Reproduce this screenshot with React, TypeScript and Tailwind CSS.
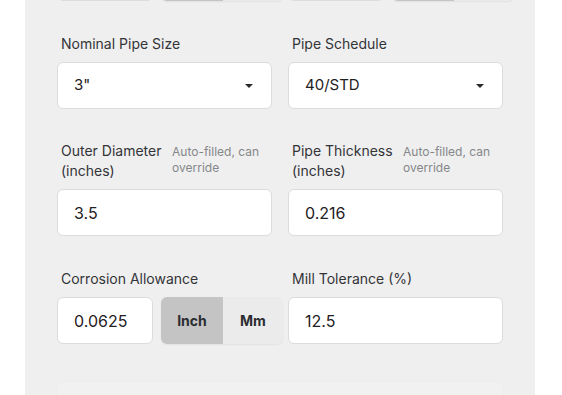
import React from "react";

function Caret() {
  return (
    <svg width="8" height="4" viewBox="0 0 8 4" className="shrink-0">
      <path d="M0 0 L8 0 L4 4 Z" fill="#2a2a2a" />
    </svg>
  );
}

function Label({ text, hint }: { text: string; hint?: string }) {
  if (!hint) {
    return <div className="pl-1 text-[14px] leading-5 text-[#333438]">{text}</div>;
  }
  return (
    <div className="flex items-baseline gap-[10px] pl-1">
      <div className="w-[101px] shrink-0 text-[14px] leading-5 text-[#333438]">{text}</div>
      <div className="flex-1 text-[12px] leading-4 text-[#85878a]">{hint}</div>
    </div>
  );
}

function Select({ value }: { value: string }) {
  return (
    <div className="flex h-[47px] items-center justify-between rounded-md border border-[#dcdcdc] bg-white pl-4 pr-[18px] text-[15px] text-[#1f2023]">
      <span>{value}</span>
      <Caret />
    </div>
  );
}

function Input({ value, className = "" }: { value: string; className?: string }) {
  return (
    <div
      className={
        "flex h-[47px] shrink-0 items-center rounded-md border border-[#dcdcdc] bg-white pl-4 text-[16px] text-[#1f2023] " +
        className
      }
    >
      {value}
    </div>
  );
}

function Toggle({ labels = true }: { labels?: boolean }) {
  return (
    <div className="flex h-[47px] w-[122px] shrink-0 overflow-hidden rounded-md bg-[#ebebeb] shadow-[0_1px_2px_rgba(0,0,0,0.06)] text-[14px] font-bold text-[#2b2d31]">
      <div className="flex w-[62px] items-center justify-center bg-[#c3c4c3]">{labels ? "Inch" : ""}</div>
      <div className="flex flex-1 items-center justify-center">{labels ? "Mm" : ""}</div>
    </div>
  );
}

export default function App() {
  return (
    <div className="h-[395px] w-[562px] overflow-hidden bg-white" style={{ fontFamily: "Inter, 'Noto Sans', sans-serif" }}>
      <div className="ml-[25px] mt-[-46px] w-[510px] bg-[#efefef] px-8 pb-10">
        {/* previous row, mostly cut off */}
        <div className="grid grid-cols-2 gap-4">
          <div className="flex gap-2">
            <Input value="" className="w-[96px]" />
            <Toggle labels={false} />
          </div>
          <div className="flex gap-2">
            <Input value="" className="w-[96px]" />
            <Toggle labels={false} />
          </div>
        </div>

        <div className="mt-[33px] flex flex-col gap-[32px]">
          <div className="grid grid-cols-2 gap-4">
            <div className="flex flex-col gap-2">
              <Label text="Nominal Pipe Size" />
              <Select value={'3"'} />
            </div>
            <div className="flex flex-col gap-2">
              <Label text="Pipe Schedule" />
              <Select value="40/STD" />
            </div>
          </div>

          <div className="grid grid-cols-2 gap-4">
            <div className="flex flex-col gap-2">
              <Label text="Outer Diameter (inches)" hint="Auto-filled, can override" />
              <Input value="3.5" />
            </div>
            <div className="flex flex-col gap-2">
              <Label text="Pipe Thickness (inches)" hint="Auto-filled, can override" />
              <Input value="0.216" />
            </div>
          </div>

          <div className="mt-[1px] grid grid-cols-2 gap-4">
            <div className="flex min-w-0 flex-col gap-2">
              <Label text="Corrosion Allowance" />
              <div className="flex gap-2">
                <Input value="0.0625" className="w-[96px]" />
                <Toggle />
              </div>
            </div>
            <div className="flex flex-col gap-2">
              <Label text="Mill Tolerance (%)" />
              <Input value="12.5" />
            </div>
          </div>

          <div className="mt-[6px] h-[120px] rounded-md bg-[#f1f1f1] shadow-[0_0_2px_rgba(0,0,0,0.04)]" />
        </div>
      </div>
    </div>
  );
}
